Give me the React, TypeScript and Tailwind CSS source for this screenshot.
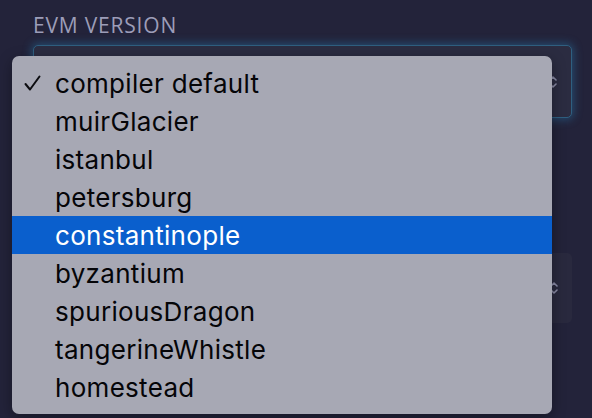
import React from "react";

const items = [
  "compiler default",
  "muirGlacier",
  "istanbul",
  "petersburg",
  "constantinople",
  "byzantium",
  "spuriousDragon",
  "tangerineWhistle",
  "homestead",
];

function Chevrons() {
  return (
    <svg width="8" height="14" viewBox="0 0 8 14" fill="none" stroke="#8a8ba6" strokeWidth="1.6" strokeLinecap="round" strokeLinejoin="round">
      <path d="M1 5l3-3 3 3" />
      <path d="M1 9l3 3 3-3" />
    </svg>
  );
}

export default function App() {
  return (
    <div className="relative w-[592px] h-[418px] overflow-hidden bg-[#23233a]" style={{ fontFamily: "Inter, 'Liberation Sans', sans-serif" }}>
      <div className="flex flex-col pl-[33px] pr-[20px] pt-[13px]">
        <div className="text-[21px] leading-[25px] text-[#9c9db8] tracking-[0.8px]" style={{ fontFamily: "'Open Sans', Lato, sans-serif" }}>
          EVM VERSION
        </div>
        <div className="mt-[7px] h-[73px] rounded-[5px] bg-[#2b2c41] border border-[#2f5f80] shadow-[0_0_8px_2px_rgba(40,120,170,0.45)] flex items-center justify-end pr-[14px]">
          <Chevrons />
        </div>
        <div className="mt-[135px] h-[70px] rounded-[5px] bg-[#29293e] flex items-center justify-end pr-[14px]">
          <Chevrons />
        </div>
      </div>

      <div className="absolute left-[12px] top-[56px] w-[540px] rounded-[7px] bg-[#a7a8b4] py-[8px] shadow-[0_4px_14px_rgba(0,0,0,0.35)]">
        {items.map((it, i) => {
          const sel = it === "constantinople";
          return (
            <div
              key={it}
              className={`relative h-[38px] flex items-center pl-[43px] text-[26px] tracking-[0.3px] ${sel ? "bg-[#0a5fcd] text-white" : "text-[#050508]"}`}
            >
              {i === 0 && (
                <svg className="absolute left-[12px] top-[11px]" width="17" height="16" viewBox="0 0 17 16" fill="none" stroke="#0c0c10" strokeWidth="2" strokeLinecap="round" strokeLinejoin="round">
                  <path d="M1.5 9l4.5 5.5L15.5 1.5" />
                </svg>
              )}
              {it}
            </div>
          );
        })}
      </div>
    </div>
  );
}
